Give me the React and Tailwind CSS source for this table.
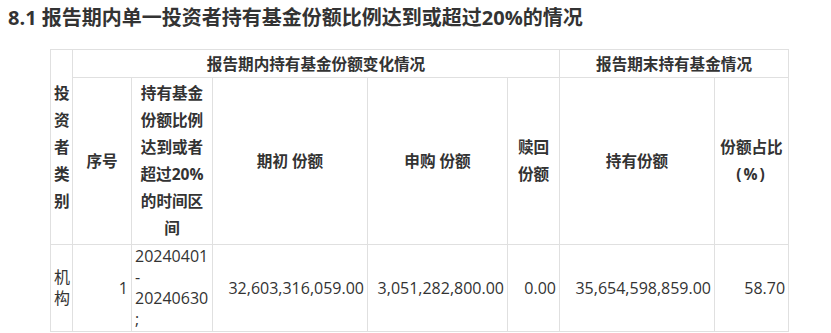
import React from "react";

const font = { fontFamily: '"Open Sans", "Noto Sans CJK SC", sans-serif' };

const App = () => {
  const th = "border border-[#e0e0e0] px-[3px] font-bold text-center align-middle";
  const td = "border border-[#e0e0e0] px-[3px] align-middle font-normal text-[16px]";

  return (
    <div className="w-[831px] h-[333px] overflow-hidden bg-white text-[#333]" style={font}>
      <h2 className="px-[8px] pt-[5px] text-[20px] leading-[26px] font-bold text-[#333]">
        8.1 报告期内单一投资者持有基金份额比例达到或超过20%的情况
      </h2>

      <table className="mt-[18px] ml-[50px] w-[738px] table-fixed border-collapse text-[15.6px]">
        <colgroup>
          <col className="w-[22px]" />
          <col className="w-[59px]" />
          <col className="w-[81px]" />
          <col className="w-[155px]" />
          <col className="w-[140px]" />
          <col className="w-[52px]" />
          <col className="w-[155px]" />
          <col className="w-[74px]" />
        </colgroup>
        <thead>
          <tr className="h-[28px] leading-[22px]">
            <th rowSpan={2} className={`${th} px-[2px] text-left leading-[27px]`}>
              投资者类别
            </th>
            <th colSpan={5} className={th}>
              报告期内持有基金份额变化情况
            </th>
            <th colSpan={2} className={th}>
              报告期末持有基金情况
            </th>
          </tr>
          <tr className="h-[167px] leading-[27px]">
            <th className={th}>序号</th>
            <th className={`${th} px-[4px]`}>持有基金份额比例达到或者超过20%的时间区间</th>
            <th className={th}>期初 份额</th>
            <th className={th}>申购 份额</th>
            <th className={th}>
              赎回
              <br />
              份额
            </th>
            <th className={th}>持有份额</th>
            <th className={th}>
              份额占比
              <br />
              <span className="tracking-[2px]">(%)</span>
            </th>
          </tr>
        </thead>
        <tbody>
          <tr className="h-[87px] leading-[21px]">
            <td className={`${td} px-[2px] text-left`}>机构</td>
            <td className={`${td} text-right`}>1</td>
            <td className={`${td} text-left`}>
              20240401
              <br />-
              <br />
              20240630
              <br />;
            </td>
            <td className={`${td} text-right`}>32,603,316,059.00</td>
            <td className={`${td} text-right`}>3,051,282,800.00</td>
            <td className={`${td} text-right`}>0.00</td>
            <td className={`${td} text-right`}>35,654,598,859.00</td>
            <td className={`${td} text-right`}>58.70</td>
          </tr>
        </tbody>
      </table>
    </div>
  );
};

export default App;
